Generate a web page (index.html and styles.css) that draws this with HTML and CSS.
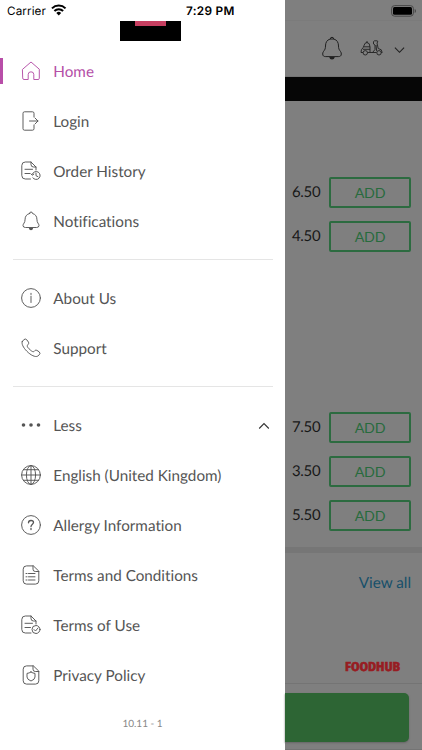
FILE: index.html
```html
<!DOCTYPE html>
<html lang="en">
<head>
<meta charset="utf-8">
<title>Menu</title>
<link rel="stylesheet" href="styles.css">
</head>
<body>
<div class="app">
  <aside class="drawer">
    <header class="status">
      <span class="carrier">Carrier</span>
      <svg class="wifi" viewBox="0 0 16 12"><path d="M1 4.3a10 10 0 0 1 14 0M3.5 7a6.4 6.4 0 0 1 9 0" fill="none" stroke="#000" stroke-width="2.1"/><path d="M5.5 9a3.6 3.6 0 0 1 5 0L8 11.6z"/></svg>
      <span class="time">7:29 PM</span>
    </header>
    <div class="logo"><div class="logo-mark"></div></div>
    <nav>
      <div class="group">
        <a class="item active"><svg class="icon" viewBox="0 0 20 20"><path d="M1.7 8.2 10 1l8.3 7.2v9.1q0 1.2-1.2 1.2h-4.3v-5q0-2.7-2.8-2.7t-2.8 2.7v5H2.900q-1.200 0-1.200-1.200z"/></svg>Home</a>
        <a class="item"><svg class="icon" viewBox="0 0 20 20"><path d="M13 6V2.300Q13 .8 11.500.8H3.500Q2 .8 2 2.300v15.400q0 1.500 1.500 1.500h8q1.500 0 1.500-1.500V14M8.500 10H17M14 7l3 3-3 3"/></svg>Login</a>
        <a class="item"><svg class="icon" viewBox="0 0 20 20"><path d="M9.500 18H4.300Q.8 18 .8 14.500v-10Q.8 1 4.300 1H10l5 5v3M10 1v2.500Q10 6 12.500 6H15M4 8.300h7.500M4 12.500h5"/><path d="M11.300 13.200a4 4 0 1 1 .5 3.600M15 12v2.700l2 1M10 13l1.300 1.200 1.500-1"/></svg>Order History</a>
        <a class="item"><svg class="icon" viewBox="0 0 20 20"><path d="M8.500 2.500a1.500 1.500 0 1 1 3 0c3 .8 4.400 3 4.400 5.700 0 4 2.100 4.300 2.100 6.300q0 2-2.500 2h-11q-2.500 0-2.500-2c0-2 2.100-2.300 2.100-6.300 0-2.700 1.400-4.900 4.400-5.700z"/><path class="solid" d="M7.800 17h4.400q-.5 2.200-2.200 2.200T7.800 17z"/></svg>Notifications</a>
      </div>
      <div class="group">
        <a class="item"><svg class="icon" viewBox="0 0 20 20"><circle cx="10" cy="10" r="9.400"/><path d="M10 8.200v6.300M10 5.300v1.200"/></svg>About Us</a>
        <a class="item"><svg class="icon" viewBox="0 0 20 20"><path d="M1.200 3.700Q2.800 1 4.300 1q1.400 0 3.200 3.200.6 1.200-.3 2.100c-1.800 1.700-.8 3 1.600 5.200s3.500 3 5 1.200q.8-.9 2-.4 3.200 1.600 3.200 3 0 1.200-2.300 2.800c-2.300 1.400-7-.9-10.900-4.900C2.200 9.500.3 5.800 1.200 3.700z"/></svg>Support</a>
      </div>
      <div class="group">
        <a class="item"><svg class="icon" viewBox="0 0 20 20"><g class="solid"><circle cx="2.500" cy="10" r="1.800"/><circle cx="10" cy="10" r="1.800"/><circle cx="17.500" cy="10" r="1.800"/></g></svg>Less<svg class="chevron" viewBox="0 0 12 8"><path d="m1.200 6.500 4.800-5 4.800 5"/></svg></a>
        <a class="item"><svg class="icon" viewBox="0 0 20 20"><circle cx="10" cy="10" r="9.400"/><ellipse cx="10" cy="10" rx="4.600" ry="9.400"/><path d="M10 .6v18.800M.6 10h18.800M2.500 4.700h15M2.500 15.300h15"/></svg>English (United Kingdom)</a>
        <a class="item"><svg class="icon" viewBox="0 0 20 20"><circle cx="10" cy="10" r="9.400"/><path class="thick" d="M7.500 7.800Q7.500 5.500 10 5.500t2.500 2.100c0 1.600-2.500 1.700-2.500 4M10 13.300v1.300"/></svg>Allergy Information</a>
        <a class="item"><svg class="icon" viewBox="0 0 20 20"><path d="M12 .9H5.500Q2.200.9 2.200 4.200v11.600q0 3.300 3.300 3.300h9q3.300 0 3.300-3.300V6.500zM12 .9v3.300q0 2.300 2.300 2.300h3.500M7.500 8.500H14M7.500 11.800H14M7.500 15H14M5 8.500h1M5 11.800h1M5 15h1"/></svg>Terms and Conditions</a>
        <a class="item"><svg class="icon" viewBox="0 0 20 20"><path d="M10 18H4.300Q.8 18 .8 14.500v-10Q.8 1 4.300 1H10l5 5v3M10 1v2.500Q10 6 12.500 6H15M4 8.300h7.500M4 12.500h5.500"/><circle cx="15" cy="14.500" r="4"/><path d="m13 14.500 1.500 1.500 2.500-3"/></svg>Terms of Use</a>
        <a class="item"><svg class="icon" viewBox="0 0 20 20"><path d="M12 .9H5.500Q2.200.9 2.200 4.200v11.600q0 3.300 3.300 3.300h9q3.300 0 3.300-3.300V6.500zM12 .9v3.300q0 2.300 2.300 2.300h3.500M10 7q2 1.300 4 1.400V12q0 2.500-4 4-4-1.500-4-4V8.400Q8 8.300 10 7z"/></svg>Privacy Policy</a>
      </div>
    </nav>
    <div class="version">10.11 - 1</div>
  </aside>
  <main class="page">
    <div class="page-status"><svg class="battery" viewBox="0 0 26 12"><rect x=".6" y=".6" width="21.800" height="10.600" rx="3" fill="none" stroke="#484848"/><rect x="2" y="2" width="19" height="7.800" rx="1.500"/><path d="M23.700 4v4q1.300-.5 1.300-2t-1.300-2z" fill="#484848"/></svg></div>
    <header class="toolbar">
      <svg class="bell" viewBox="0 0 20 24"><path d="M8.300 3a1.700 1.700 0 1 1 3.400 0c3.500.8 4.800 3.800 4.800 7 0 5 2.800 4.800 2.800 8 0 2-1.300 2.600-3 2.600H3.700C2 20.600.7 20 .7 18c0-3.200 2.800-3 2.800-8 0-3.200 1.300-6.200 4.800-7zM8 3h4"/><path class="solid" d="M7.200 21h5.600q-.6 2.500-2.800 2.500T7.200 21z"/></svg>
      <svg class="scooter" viewBox="0 0 23 16"><path d="M3 12.500H1Q.8 9.500 3.200 7.500L4 5.500Q4.700 2.500 7 2.500q3 .3 3 4.500v5.500H7.500M4 6.800h6M3 9.300h7M6 2h2M10 12.500h6.500M12.500 12.500 15 9.500V5l-1.500-1q-.5-3.200 1-3.200H17q1 0 .7 1.200l-.7 1 1.200 5.500q4 .5 4 4h-1M16 5l.7 6"/><circle cx="5.300" cy="12.800" r="2.200"/><circle cx="19" cy="12.800" r="2.200"/></svg>
      <svg class="chevron-down" viewBox="0 0 12 8"><path d="m1 1.500 5 5 5-5"/></svg>
    </header>
    <div class="banner"></div>
    <section class="products first">
      <div class="row"><span>6.50</span><button>ADD</button></div>
      <div class="row"><span>4.50</span><button>ADD</button></div>
    </section>
    <section class="products second">
      <div class="row"><span>7.50</span><button>ADD</button></div>
      <div class="row"><span>3.50</span><button>ADD</button></div>
      <div class="row"><span>5.50</span><button>ADD</button></div>
    </section>
    <section class="reviews"><a class="view-all">View all</a><div class="brand">FOODHUB</div></section>
    <footer><div class="basket"></div></footer>
  </main>
</div>
</body>
</html>
```
FILE: styles.css
```css
* { box-sizing: border-box; }
body { margin: 0; font-family: Lato, sans-serif; color: #555; text-rendering: geometricPrecision; font-feature-settings: "liga" 0; }
.app { display: flex; width: 422px; height: 750px; overflow: hidden; background: #fff; }
.drawer { display: flex; flex-direction: column; width: 285px; flex: none; background: #fff; }
.status { display: flex; align-items: center; height: 20.5px; padding: 1px 0 0 7px; font-family: Inter, sans-serif; color: #000; flex: none; }
.carrier { font-size: 11.7px; width: 39px; letter-spacing: .1px; }
.wifi { width: 15.500px; height: 12px; margin: -1px 0 0 5px; }
.time { margin-left: 119.500px; font-size: 11.8px; font-weight: 600; letter-spacing: .3px; white-space: nowrap; }
.logo { width: 61px; height: 20.5px; margin-left: 120px; background: #000; flex: none; }
.logo-mark { width: 31px; height: 5.5px; margin: 0 auto; background: #c73f61; }
nav { padding-top: 5px; }
.group + .group { margin-top: 13px; padding-top: 14.200px; position: relative; }
.group + .group::before { content: ""; position: absolute; top: 0; left: 13px; right: 12px; height: 1px; background: #e5e5e5; }
.item { display: flex; align-items: center; height: 50px; padding: 2px 15px 0 21px; font-size: 15.25px; line-height: 20px; white-space: nowrap; }
.item.active { color: #b44fa7; padding-left: 18px; border-left: 3px solid #b84ea8; height: 26px; margin: 12px 0; }
svg { display: block; flex: none; }
.icon { width: 20px; height: 20px; margin: -2px 12.300px 0 0; fill: none; stroke: currentColor; stroke-width: .95; stroke-linecap: round; stroke-linejoin: round; }
.solid { fill: currentColor; stroke: none; }
.thick { stroke-width: 1.300; }
.chevron { width: 12px; height: 8px; margin: -1px 0 0 auto; fill: none; stroke: #333; stroke-width: 1.1; }
.version { margin-top: 15.800px; text-align: center; font-size: 10px; line-height: 16px; color: #888; }
.page { display: flex; flex-direction: column; width: 137px; background: #7f7f7f; color: #171717; }
.page-status { display: flex; justify-content: flex-end; height: 20px; padding: 4.500px 5px 0 0; }
.battery { width: 26px; height: 12px; }
.toolbar { display: flex; align-items: center; height: 57px; padding: 0 17px 2px 37px; color: #202020; border-top: 1px solid #7b7b7b; border-bottom: 1px solid #747474; fill: none; stroke: currentColor; }
.bell { width: 20px; height: 24px; }
.scooter { width: 23px; height: 16px; margin: 1px 0 0 17.500px; stroke-width: .9; }
.chevron-down { width: 11px; height: 8px; margin: 4px 0 0 auto; stroke-width: 1.2; }
.banner { height: 24px; background: #060606; }
.products { display: flex; flex-direction: column; gap: 13px; padding: 0 11px 0 7px; }
.first { padding-top: 76.300px; height: 311px; }
.second { height: 141px; border-bottom: 6px solid #767676; }
.row { display: flex; justify-content: space-between; height: 31px; font-size: 14.9px; line-height: 30px; letter-spacing: -.3px; }
button { width: 82px; padding: 0; background: transparent; border: 2px solid #2c6b40; border-radius: 2px; color: #286b3d; font: 14.2px Lato, sans-serif; letter-spacing: -.2px; }
.reviews { display: flex; flex-direction: column; align-items: flex-end; height: 131px; padding: 20px 11px 0 0; border-bottom: 1px solid #747474; }
.view-all { color: #164f6a; font-size: 15.25px; line-height: 20px; }
.brand { margin: 64px 10.500px 0 0; color: #971c22; font: 700 12.5px/20px "Open Sans", sans-serif; font-stretch: 75%; letter-spacing: -.1px; -webkit-text-stroke: .6px #971c22; transform: scaleX(1.17); transform-origin: right; }
footer { height: 66px; padding: 9px 13px 8px 0; border-bottom: 1px solid #747474; }
.basket { height: 49px; background: #2d6534; border-radius: 0 5px 5px 0; box-shadow: 0 1px 2px #666; }
```
